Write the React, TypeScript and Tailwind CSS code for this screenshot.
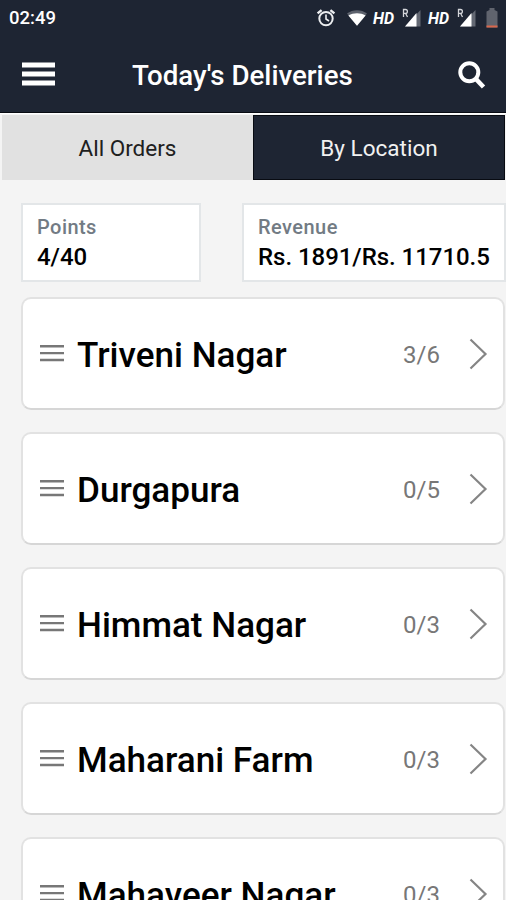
type Stop = { name: string; count: string };

const stops: Stop[] = [
  { name: "Triveni Nagar", count: "3/6" },
  { name: "Durgapura", count: "0/5" },
  { name: "Himmat Nagar", count: "0/3" },
  { name: "Maharani Farm", count: "0/3" },
  { name: "Mahaveer Nagar", count: "0/3" },
];

function AlarmIcon() {
  return (
    <svg className="h-[20px] w-[20px]" viewBox="0 0 20 20" fill="none" stroke="#eceef0" strokeWidth="2">
      <circle cx="10" cy="10.600" r="6.700" />
      <path d="M1.600 5.400 5.600 2.100M18.400 5.400l-4-3.300" strokeWidth="2.400" />
      <path d="M10 6.600v4.400l3 2" strokeWidth="1.600" />
    </svg>
  );
}

function WifiIcon() {
  return (
    <svg className="h-[18px] w-[22px]" viewBox="0 0 22 18">
      <path d="M1 4.600C6.500.100 15.500.100 21 4.600L11 16.800Z" fill="#5d626d" />
      <path d="M2.400 6.400C7.600 3.500 14.400 3.500 19.600 6.400L11 16.800Z" fill="#fff" />
    </svg>
  );
}

function SignalIcon() {
  return (
    <svg className="h-[20px] w-[20px]" viewBox="0 0 20 20">
      <path d="M18.500 2v16.500H3Z" fill="#636873" />
      <path d="M14.500 5v13.500H3Z" fill="#fff" />
      <path d="M1.500 9V1.500h2a1.900 1.900 0 0 1 0 3.800h-2M3.500 5.300l2 3.700" fill="none" stroke="#d4d6da" strokeWidth="1.300" />
    </svg>
  );
}

function StatusBar() {
  return (
    <div className="flex h-[36px] items-center pl-[9px] text-white">
      <span className="w-[307px] text-[18.500px] leading-[36px] font-medium">02:49</span>
      <div className="flex h-full w-[190px] items-center">
        <AlarmIcon />
        <span className="ml-[10px] flex"><WifiIcon /></span>
        <span className="mt-px ml-[5px] w-[23px] text-[16px] font-bold italic">HD</span>
        <span className="ml-[6px] flex"><SignalIcon /></span>
        <span className="mt-px ml-[6px] w-[23px] text-[16px] font-bold italic">HD</span>
        <span className="ml-[6px] flex"><SignalIcon /></span>
        <svg className="ml-[9px] h-[20px] w-[12px] shrink-0" viewBox="0 0 12 20">
          <path d="M3.500 0h5v2l3 1.500V19.500H.500V3.500l3-1.500Z" fill="#60646e" />
          <path d="M.500 17.500h11V19.500H.500Z" fill="#d9674c" />
        </svg>
      </div>
    </div>
  );
}

function Header() {
  return (
    <header className="h-[113px] shrink-0 border-b border-[#080b12] bg-[#1e2533]">
      <StatusBar />
      <div className="flex h-[76px] items-center pl-[22px]">
        <svg className="h-[24px] w-[33px]" viewBox="0 0 33 24" fill="#fff">
          <path d="M0 .500h33v5H0zM0 9.500h33v5H0zM0 18.500h33v5H0z" />
        </svg>
        <h1 className="mt-[3px] ml-[77px] w-[326px] text-[27.700px] font-medium text-white">Today's Deliveries</h1>
        <svg className="mt-[2px] h-[28px] w-[28px]" viewBox="0 0 28 28" fill="none" stroke="#fff" strokeWidth="4">
          <circle cx="11.300" cy="11.300" r="9" />
          <path d="m17.500 17.500 8 8.500" strokeWidth="4.600" />
        </svg>
      </div>
    </header>
  );
}

function Tabs() {
  return (
    <nav className="flex h-[67px] shrink-0 border-t border-white px-[1px] pt-px text-[22.500px]">
      <button className="ml-[1px] w-[251px] bg-[#e1e1e1] pt-[2px] text-[#202020]">All Orders</button>
      <button className="w-[252px] border border-[#080b12] bg-[#1e2533] pt-[2px] text-[#f1f1f1]">By Location</button>
    </nav>
  );
}

function Stat({ label, value, className }: { label: string; value: string; className: string }) {
  return (
    <div className={`h-[79px] border-2 border-[#e3e6e8] bg-white pt-[8px] pl-[14px] whitespace-nowrap ${className}`}>
      <div className="text-[20px] leading-[28px] font-medium tracking-[0.450px] text-[#727b84]">{label}</div>
      <div className="text-[24px] leading-[32px] font-medium tracking-[-0.040px] text-black">{value}</div>
    </div>
  );
}

function StopCard({ name, count }: Stop) {
  return (
    <li className="flex h-[113px] shrink-0 items-center rounded-[10px] border-2 border-[#e2e2e2] border-b-[#d6d6d6] bg-white pl-[17px]">
      <svg className="h-[17px] w-[24px]" viewBox="0 0 24 17" fill="#777">
        <path d="M0 0h24v2.400H0zM0 6.900h24v2.400H0zM0 13.800h24v2.400H0z" />
      </svg>
      <span className="mt-[4px] ml-[13px] w-[326px] text-[35.100px] font-medium text-black">{name}</span>
      <span className="mt-[3px] w-[38px] text-[24px] text-[#777]">{count}</span>
      <svg className="ml-[28px] h-[32px] w-[19px]" viewBox="0 0 19 32" fill="none" stroke="#858585" strokeWidth="2.200">
        <path d="m1.500 1.500 15 14.500-15 14.500" />
      </svg>
    </li>
  );
}

export default function App() {
  return (
    <main className="flex h-[900px] w-[506px] flex-col overflow-hidden bg-[#f4f4f4] font-['Roboto',sans-serif]">
      <Header />
      <Tabs />
      <section className="mt-[23px] flex shrink-0 gap-[41px] pl-[21px]">
        <Stat label="Points" value="4/40" className="w-[180px]" />
        <Stat label="Revenue" value="Rs. 1891/Rs. 11710.5" className="w-[264px]" />
      </section>
      <ul className="mt-[15px] mr-[1px] ml-[21px] flex flex-col gap-[22px]">
        {stops.map((stop) => (
          <StopCard key={stop.name} {...stop} />
        ))}
      </ul>
    </main>
  );
}
